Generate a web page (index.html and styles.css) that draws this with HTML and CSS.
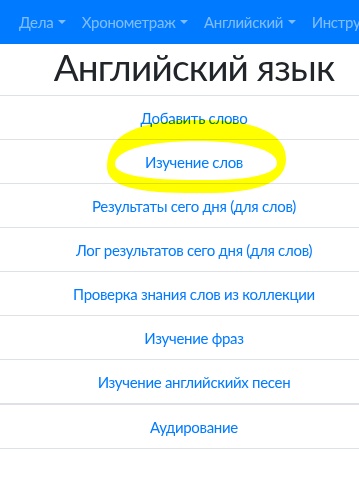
FILE: index.html
```html
<!DOCTYPE html>
<html lang="ru">
<head>
    <meta charset="UTF-8">
    <meta name="viewport" content="width=device-width, initial-scale=1.0">
    <title>Английский язык</title>
    <link rel="stylesheet" href="styles.css">
</head>
<body>
    <div class="page">
        <nav class="navbar">
            <a class="nav-link dropdown-toggle" href="#">Дела</a>
            <a class="nav-link dropdown-toggle" href="#">Хронометраж</a>
            <a class="nav-link dropdown-toggle" href="#">Английский</a>
            <a class="nav-link dropdown-toggle" href="#">Инструменты</a>
        </nav>

        <h1 class="page-title">Английский язык</h1>

        <table class="menu-table">
            <tbody>
                <tr><td><a href="#">Добавить слово</a></td></tr>
                <tr><td><a href="#">Изучение слов</a></td></tr>
                <tr><td><a href="#">Результаты сего дня (для слов)</a></td></tr>
                <tr><td><a href="#">Лог результатов сего дня (для слов)</a></td></tr>
                <tr><td><a href="#">Проверка знания слов из коллекции</a></td></tr>
                <tr><td><a href="#">Изучение фраз</a></td></tr>
                <tr><td><a href="#">Изучение английскийх песен</a></td></tr>
            </tbody>
            <tbody class="second-group">
                <tr><td><a href="#">Аудирование</a></td></tr>
            </tbody>
        </table>

        <!-- yellow marker circle drawn over the page -->
        <svg class="marker" width="388" height="481" viewBox="0 0 388 481">
            <path fill-rule="evenodd" fill="#ffff00"
                d="M196 120 C252 119 287 132 286 160 C285 186 250 194 196 193 C140 193 106 188 107 166 C108 132 140 121 196 120 Z
                   M196 141 C246 141 277 150 277 163 C277 175 245 181 196 180 C150 180 115 176 115 164 C115 150 150 141 196 141 Z"/>
        </svg>
    </div>
</body>
</html>
```

FILE: styles.css
```css
html {
    overflow: hidden;
}

body {
    margin: 0;
    font-family: Lato, Roboto, Arial, sans-serif;
    font-size: 15px;
    letter-spacing: -0.3px;
    color: #212529;
    background: #fff;
}

.page {
    position: relative;
    width: 388px;
}

.navbar {
    display: flex;
    height: 44px;
    padding-left: 11px;
    background-color: #007bff;
    white-space: nowrap;
}

.nav-link {
    flex-shrink: 0;
    padding: 0 8px;
    line-height: 44px;
    color: rgba(255, 255, 255, 0.5);
    text-decoration: none;
}

.dropdown-toggle::after {
    content: "";
    display: inline-block;
    margin-left: 0.3em;
    vertical-align: 0.255em;
    border-top: 0.3em solid;
    border-right: 0.3em solid transparent;
    border-left: 0.3em solid transparent;
}

.page-title {
    margin: 0;
    height: 51px;
    font-size: 37px;
    font-weight: 400;
    letter-spacing: -0.8px;
    line-height: 46px;
    text-align: center;
}

.menu-table {
    width: 100%;
    border-collapse: collapse;
}

.menu-table td {
    height: 43px;
    padding: 0;
    border-top: 1px solid #dee2e6;
    text-align: center;
    vertical-align: middle;
}

.menu-table tr:last-child td {
    border-bottom: 1px solid #dee2e6;
}

.second-group td {
    border-top: 2px solid #dee2e6;
}

.menu-table a {
    color: #007bff;
    text-decoration: none;
}

.marker {
    position: absolute;
    left: 0;
    top: 0;
    pointer-events: none;
    mix-blend-mode: multiply;
}
```
